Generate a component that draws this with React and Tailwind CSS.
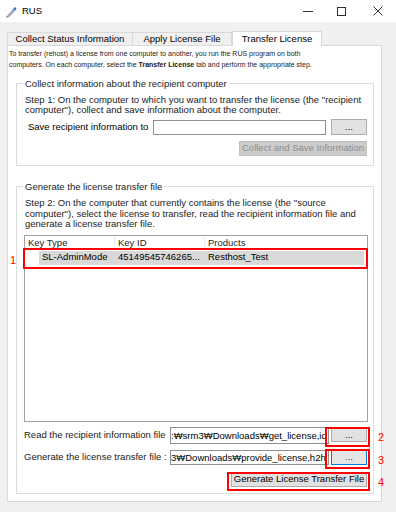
import React from 'react';

const font = { fontFamily: '"Liberation Sans", Arial, sans-serif' };

const TitleIcon = () => (
  <svg width="12" height="12" viewBox="0 0 12 12">
    <path d="M2 10 L8 3 L10 5 L4 11 Z" fill="#9aa7b4" />
    <path d="M8 3 L10 1 L11.5 2.5 L10 5 Z" fill="#3b79c4" />
    <path d="M2 10 L1 11.5 L4 11 Z" fill="#555" />
  </svg>
);

const Btn = ({ children, className = '' }) => (
  <div className={`flex items-center justify-center border border-[#adadad] bg-[#e1e1e1] text-[9.5px] text-black ${className}`}>
    {children}
  </div>
);

const Annot = ({ className }) => (
  <div className={`absolute border-2 border-[#ff0000] pointer-events-none ${className}`} />
);

const Num = ({ n, className }) => (
  <div className={`absolute text-[11px] leading-none text-[#ff0000] ${className}`}>{n}</div>
);

const App = () => {
  return (
    <div className="relative w-[396px] h-[512px] overflow-hidden bg-[#f0f0f0] text-black" style={font}>
      {/* title bar */}
      <div className="flex items-center h-[22px] bg-white">
        <div className="ml-[5px] mt-[1px]"><TitleIcon /></div>
        <span className="ml-[5px] text-[9.5px]">RUS</span>
        <div className="ml-auto flex items-center">
          <div className="w-[10px] h-px bg-[#333]" />
          <div className="ml-[24px] w-[9px] h-[9px] border border-[#333]" />
          <svg className="ml-[27px] mr-[13px]" width="10" height="10" viewBox="0 0 10 10">
            <path d="M0.5 0.5 L9.5 9.5 M9.5 0.5 L0.5 9.5" stroke="#333" strokeWidth="1" />
          </svg>
        </div>
      </div>

      {/* tabs */}
      <div className="flex items-end h-[23px] pl-[7px] text-[9.5px]">
        <div className="flex items-center justify-center w-[126px] h-[13px] border border-b-0 border-[#d9d9d9] bg-[#f0f0f0]">
          Collect Status Information
        </div>
        <div className="flex items-center justify-center w-[99px] h-[13px] border border-l-0 border-b-0 border-[#d9d9d9] bg-[#f0f0f0]">
          Apply License File
        </div>
        <div className="relative z-10 -mb-px flex items-center justify-center w-[90px] h-[15px] border border-b-0 border-[#d9d9d9] bg-white">
          Transfer License
        </div>
      </div>

      {/* panel */}
      <div className="relative ml-[7px] w-[375px] h-[457px] border border-[#d9d9d9] bg-white">
        <div className="pt-[2px] pl-[1px] text-[7px] leading-[11px] text-[#222]">
          <div>To transfer (rehost) a license from one computer to another, you run the RUS program on both</div>
          <div>computers. On each computer, select the <b>Transfer License</b> tab and perform the appropriate step.</div>
        </div>

        {/* group 1 */}
        <fieldset className="mt-[8px] ml-[8px] w-[358px] border border-[#dcdcdc] pl-[8px] pr-[6px] pt-[6px] pb-[9px]">
          <legend className="px-[2px] -ml-[2px] text-[9.5px] leading-[11px] text-[#222]">Collect information about the recipient computer</legend>
          <div className="text-[9.5px] leading-[10px] text-[#222]">
            <div>Step 1: On the computer to which you want to transfer the license (the "recipient</div>
            <div>computer"), collect and save information about the computer.</div>
          </div>
          <div className="flex items-center mt-[4px] h-[16px]">
            <span className="pl-[3px] w-[128px] text-[9.5px]">Save recipient information to</span>
            <div className="w-[173px] h-[15px] border border-[#8f8f8f] bg-white" />
            <Btn className="ml-[5px] w-[36px] h-[16px] text-[#555]">...</Btn>
          </div>
          <div className="flex justify-end mt-[6px]">
            <div className="flex items-center justify-center w-[128px] h-[15px] border border-[#bfbfbf] bg-[#cccccc] text-[9.5px] text-[#8d8d8d]">
              Collect and Save Information
            </div>
          </div>
        </fieldset>

        {/* group 2 */}
        <fieldset className="mt-[15px] ml-[8px] w-[358px] border border-[#dcdcdc] pl-[8px] pr-[6px] pt-[6px] pb-[6px]">
          <legend className="px-[2px] -ml-[2px] text-[9.5px] leading-[11px] text-[#222]">Generate the license transfer file</legend>
          <div className="text-[9.5px] leading-[10.5px] text-[#222]">
            <div>Step 2: On the computer that currently contains the license (the "source</div>
            <div>computer"), select the license to transfer, read the recipient information file and</div>
            <div>generate a license transfer file.</div>
          </div>

          {/* list */}
          <div className="relative -mx-[1px] mt-[5px] h-[187px] border border-[#a0a0a0] bg-white text-[9.5px]">
            <div className="flex h-[15px] items-center text-[#222]">
              <div className="w-[90px] pl-[3px] border-r border-[#ececec]">Key Type</div>
              <div className="w-[90px] pl-[3px] border-r border-[#ececec]">Key ID</div>
              <div className="pl-[3px]">Products</div>
            </div>
            <div className="flex h-[14px] items-center">
              <div className="w-[14px]" />
              <div className="flex flex-1 items-center h-full mr-[3px] bg-[#d9d9d9]">
                <div className="w-[76px] pl-[3px]">SL-AdminMode</div>
                <div className="w-[90px] pl-[3px]">45149545746265...</div>
                <div className="pl-[3px]">Resthost_Test</div>
              </div>
            </div>
            <Annot className="-left-[2px] -right-[1px] top-[12px] h-[21px]" />
          </div>

          {/* file rows */}
          <div className="flex items-center mt-[5px] h-[17px] -ml-[1px]">
            <span className="w-[146px] text-[9.5px] text-[#222]">Read the recipient information file</span>
            <div className="w-[159px] h-[17px] border border-[#8f8f8f] bg-white overflow-hidden whitespace-nowrap text-[9.5px] leading-[15px]">
              :₩srm3₩Downloads₩get_license,id
            </div>
            <Btn className="ml-[2px] w-[36px] h-[14px] text-[#333]">...</Btn>
          </div>
          <div className="flex items-center mt-[5px] h-[17px] -ml-[1px]">
            <span className="w-[146px] text-[9.5px] text-[#222]">Generate the license transfer file :</span>
            <div className="w-[159px] h-[15px] border border-[#8f8f8f] bg-white overflow-hidden whitespace-nowrap text-[9.5px] leading-[13px]">
              3₩Downloads₩provide_license,h2h
            </div>
            <div className="ml-[2px] flex items-center justify-center w-[36px] h-[15px] border border-[#0078d7] bg-[#e5e5e5] text-[9.5px] text-[#333]">...</div>
          </div>
          <div className="flex justify-end mt-[6px]">
            <Btn className="w-[136px] h-[15px]">Generate License Transfer File</Btn>
          </div>
        </fieldset>
      </div>

      {/* annotations */}
      <Num n="1" className="left-[10px] top-[255px]" />
      <Annot className="left-[325px] top-[427px] w-[45px] h-[20px]" />
      <Num n="2" className="left-[378px] top-[432px]" />
      <Annot className="left-[325px] top-[449px] w-[45px] h-[20px]" />
      <Num n="3" className="left-[378px] top-[455px]" />
      <Annot className="left-[227px] top-[472px] w-[143px] h-[19px]" />
      <Num n="4" className="left-[378px] top-[477px]" />
    </div>
  );
};

export default App;
